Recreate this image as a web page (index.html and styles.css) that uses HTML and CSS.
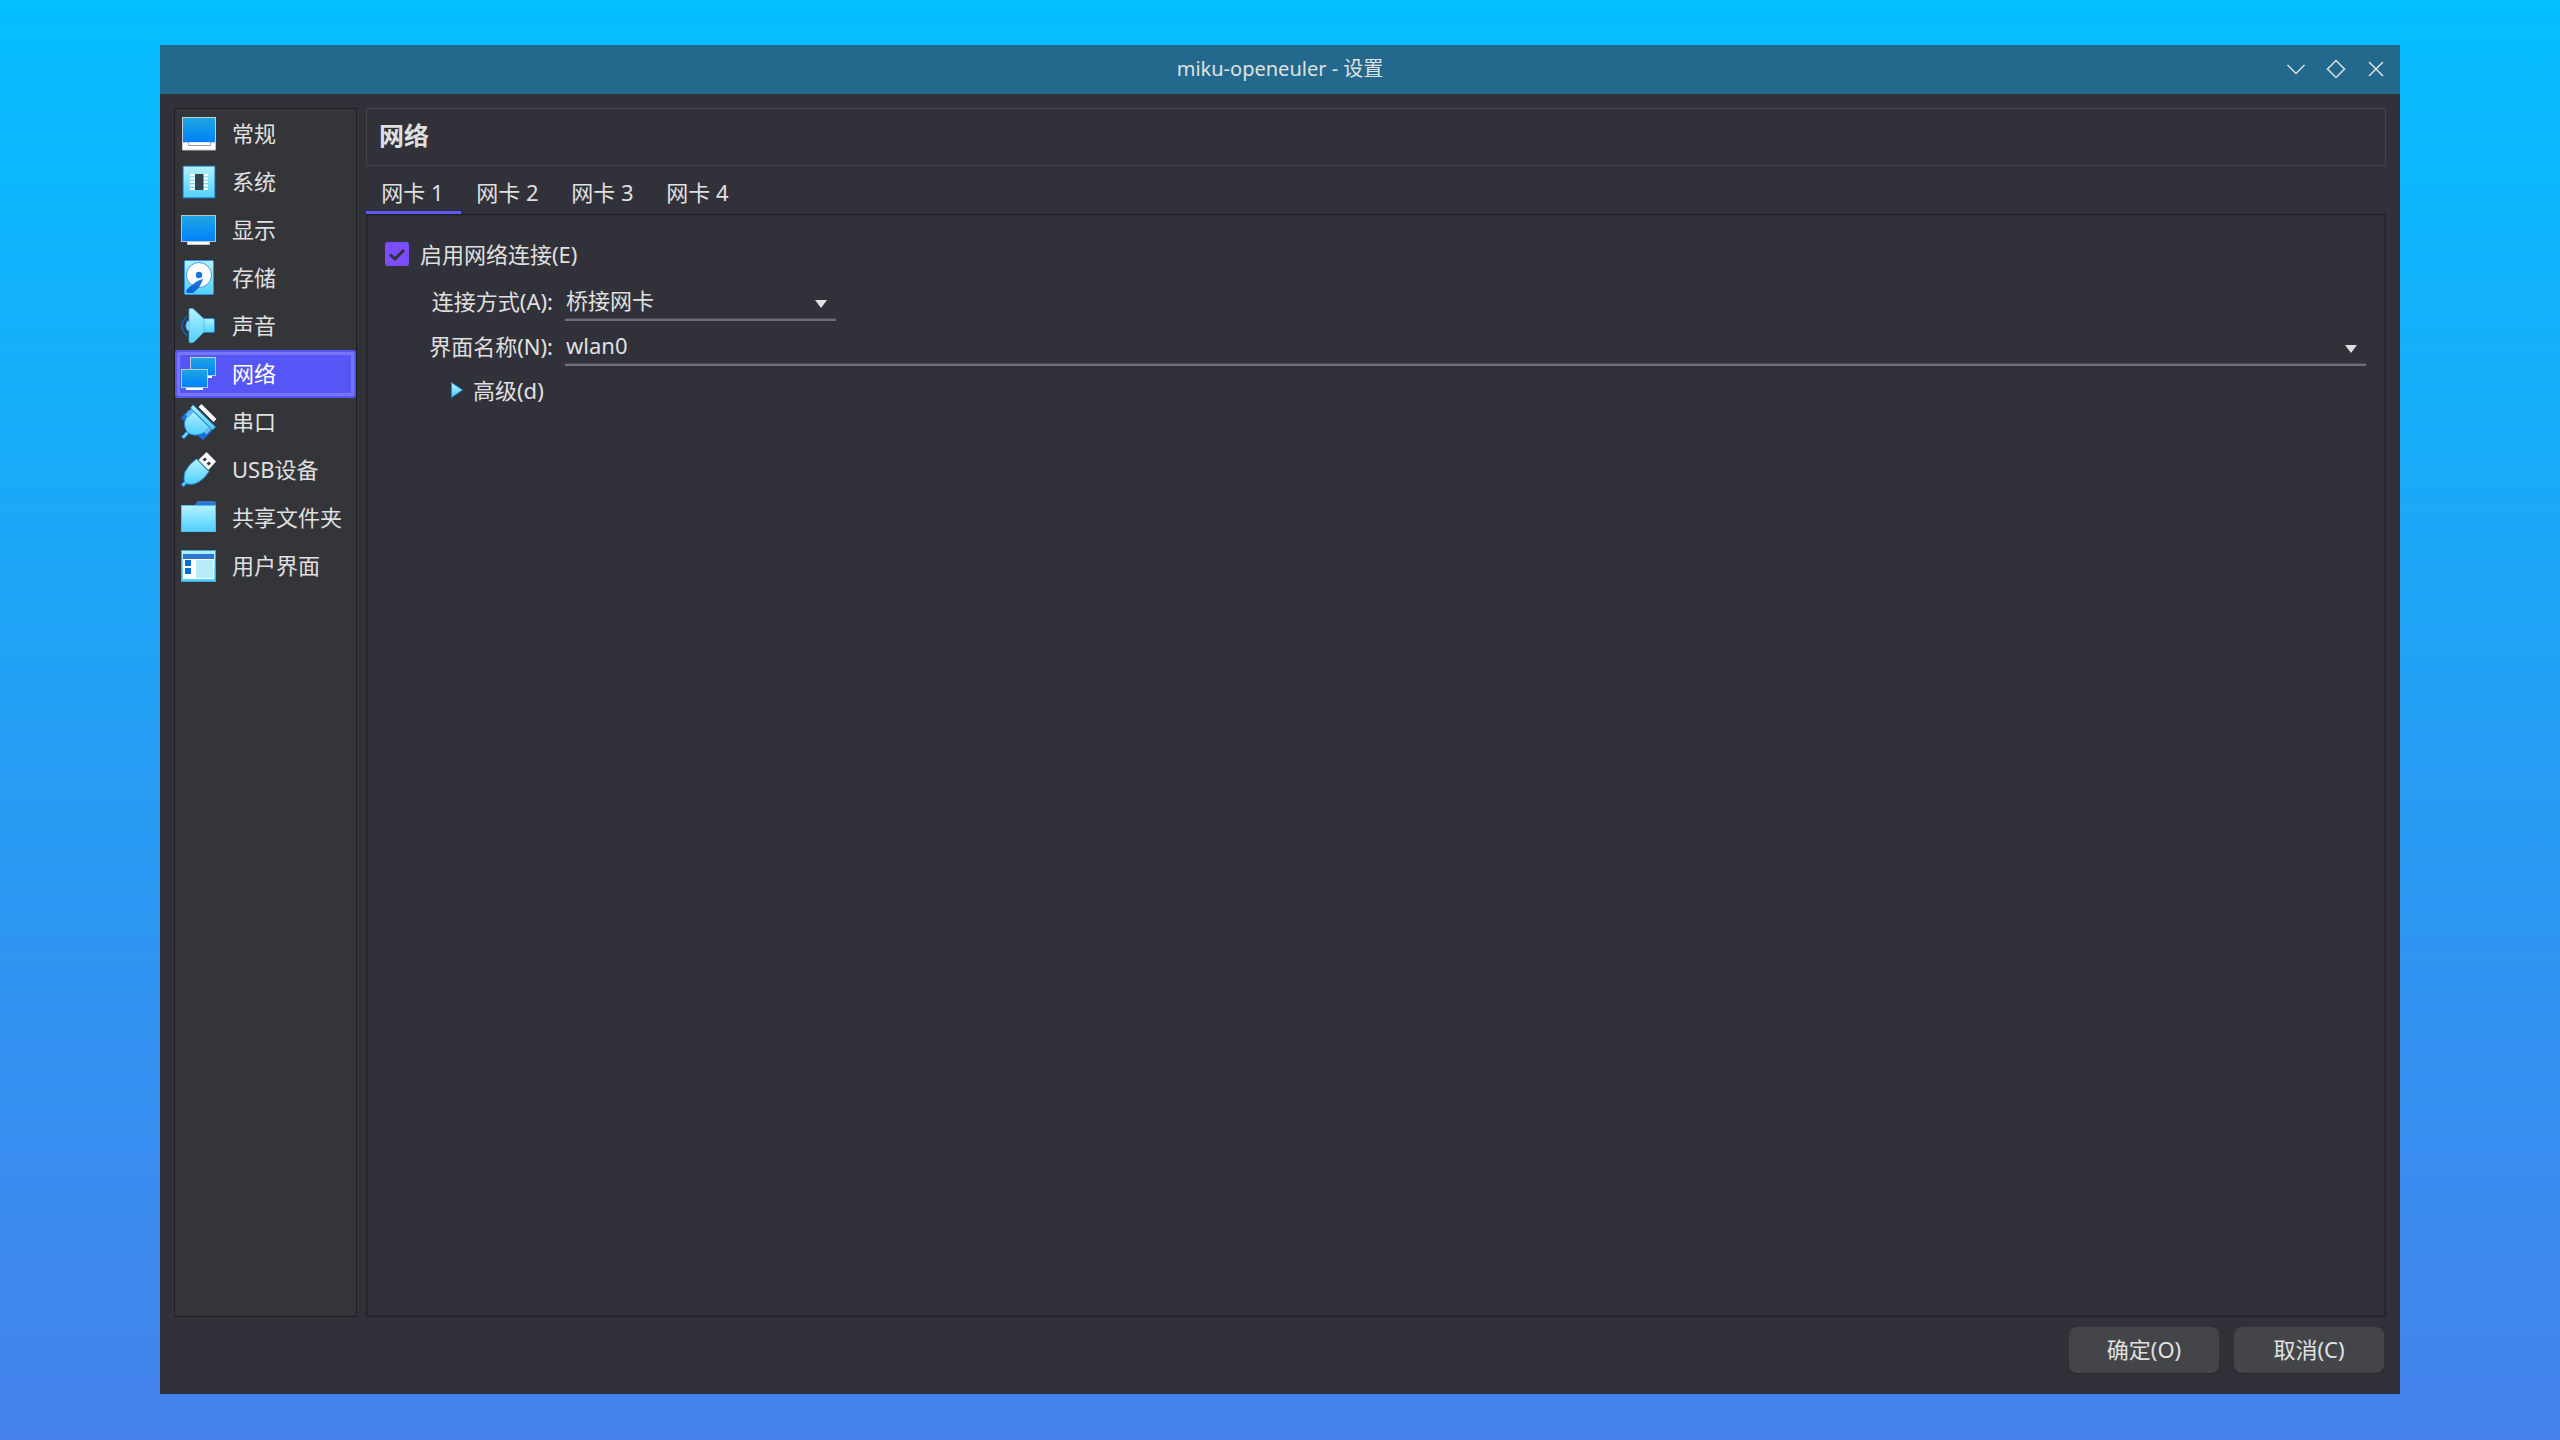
FILE: index.html
```html
<!DOCTYPE html>
<html lang="zh-CN">
<head>
<meta charset="utf-8">
<title>miku-openeuler - 设置</title>
<link rel="stylesheet" href="styles.css">
</head>
<body>
<svg class="defs" aria-hidden="true">
  <defs>
    <linearGradient id="screen" x1="0" y1="0" x2="0" y2="1"><stop offset="0" stop-color="#20a6e0"/><stop offset="1" stop-color="#0080fc"/></linearGradient>
    <linearGradient id="sky" x1="0" y1="0" x2="0" y2="1"><stop offset="0" stop-color="#b4f2ff"/><stop offset="1" stop-color="#50d0ff"/></linearGradient>
    <linearGradient id="deep" x1="0" y1="0" x2="0" y2="1"><stop offset="0" stop-color="#3478d8"/><stop offset="1" stop-color="#0062d6"/></linearGradient>
  </defs>
</svg>
<main class="window">
  <header class="titlebar">
    <h1 class="title">miku-openeuler - 设置</h1>
    <div class="controls">
      <button class="control" aria-label="最小化"><svg viewBox="0 0 20 20"><path d="M1.500 6L10 14.500L18.500 6"/></svg></button>
      <button class="control" aria-label="最大化"><svg viewBox="0 0 20 20"><path d="M10 1.500L18.500 10L10 18.500L1.500 10Z"/></svg></button>
      <button class="control" aria-label="关闭"><svg viewBox="0 0 20 20"><path d="M3 3L17 17M17 3L3 17"/></svg></button>
    </div>
  </header>
  <div class="content">
    <nav class="sidebar">
      <button class="item"><svg class="icon" viewBox="0 0 36 36"><rect x="1.500" y="1.500" width="33" height="25" fill="url(#screen)" stroke="#c5cdd2"/><path d="M1.500 26.500H34.500V34H1.500Z" fill="#fff" stroke="#c8c8c8"/><path d="M7.500 26.500V29.500H29.500V26.500" fill="#fff" stroke="#999"/></svg>常规</button>
      <button class="item"><svg class="icon" viewBox="0 0 36 36"><rect x="2" y="2" width="32" height="32" fill="url(#sky)" stroke="#1565b8"/><path d="M9 11H27M9 14.500H27M9 18H27M9 21.500H27M9 25H27" stroke="#fff" stroke-width="2"/><rect x="14" y="10" width="8.500" height="16" fill="#3a414e"/></svg>系统</button>
      <button class="item"><svg class="icon" viewBox="0 0 36 36"><rect x="6.500" y="28.500" width="22" height="4" fill="#fff" stroke="#ccc"/><rect x=".5" y="3.500" width="34" height="26" fill="url(#screen)" stroke="#b4c3cc"/></svg>显示</button>
      <button class="item"><svg class="icon" viewBox="0 0 36 36"><rect x="3.500" y=".5" width="29" height="34" rx="1" fill="url(#sky)" stroke="#2e92e8"/><circle cx="18" cy="15" r="12.500" fill="#fff" stroke="#4a9ae0"/><circle cx="18" cy="15" r="3.200" fill="#1a74d8"/><path d="M22 19C17 20 11 24 5.500 30Q4.500 33 7 33H12Q20 27 22 19Z" fill="url(#deep)"/></svg>存储</button>
      <button class="item"><svg class="icon" viewBox="0 0 36 36"><path d="M6 8.500Q-4.500 18 6 27.500" fill="none" stroke="#1763b0" stroke-width="1.500"/><path d="M9 13H6Q3.500 18 6 22.500H9Z" fill="#8fe2ff" stroke="#2585d0"/><path d="M22 10.500H32Q33.500 10.500 33.500 12V23Q33.500 24.500 32 24.500H22Z" fill="url(#sky)" stroke="#2585d0"/><path d="M8 1Q10 -.5 12.500 1L23 11V24L13 34Q10 36 8 34Z" fill="url(#sky)" stroke="#48aee8" stroke-width=".7"/></svg>声音</button>
      <button class="item selected" aria-current="page"><svg class="icon" viewBox="0 0 36 36"><path d="M25 19H31V22H25Z" fill="#fff"/><rect x="9.500" y="1.500" width="25" height="18" fill="url(#screen)" stroke="#b9cbd8"/><rect x="5" y="31" width="17" height="3" fill="#fff"/><rect x=".5" y="13.500" width="26" height="18" fill="url(#screen)" stroke="#b9cbd8"/></svg>网络</button>
      <button class="item"><svg class="icon" viewBox="0 0 36 36"><path d="M19 1.500L34 16.500" stroke="#fff" stroke-width="4"/><path d="M0 14L8 5L12 9L4 18ZM27 23L31 27L22 36L17 32Z" fill="#1670dc"/><path d="M1.500 34L8 27" stroke="#1f86e0" stroke-width="4"/><path d="M2 33.500L8 27" stroke="#78dcff" stroke-width="2"/><path d="M11 6L29 24L24 28Q15 34 7 29Q1 22 5 14Z" fill="url(#sky)" stroke="#1f80d8"/><path d="M12 .8L34.500 23L31.500 26L9.500 4Z" fill="url(#sky)" stroke="#2590e0"/><path d="M11.500 6.500L6 12M29 24L24 29" stroke="#65b8f2" stroke-width="4"/></svg>串口</button>
      <button class="item"><svg class="icon" viewBox="0 0 36 36"><path d="M1 34L6 29" stroke="#1f86e0" stroke-width="4"/><path d="M2 33L7 28" stroke="#78dcff" stroke-width="2"/><path d="M15.500 7L28 19.500Q22 29 13 32Q7 33 4 31Q2 27 4 20Q8 12 15.500 7Z" fill="url(#sky)" stroke="#2590e0"/><path d="M25.500 0L35 9.500L27.500 18L17.500 8Z" fill="#fff"/><path d="M21.500 7.500L24 5.500L26 7.500L23.500 9.500ZM25.500 11.500L28 9.500L30 11.500L27.500 13.500Z" fill="#333"/></svg>USB设备</button>
      <button class="item"><svg class="icon" viewBox="0 0 36 36"><path d="M13 6L16.500 1H34L35 3V6Z" fill="#2d76d2"/><rect x=".5" y="5.500" width="34" height="26" fill="url(#sky)" stroke="#55bdf4"/></svg>共享文件夹</button>
      <button class="item"><svg class="icon" viewBox="0 0 36 36"><rect x=".5" y="2.500" width="34" height="31" fill="url(#sky)" stroke="#42a8e8"/><path d="M2 6H33V31H2Z" fill="#fff"/><path d="M2 6H33V11H2Z" fill="#2f75d0"/><path d="M4 12H10V18H4ZM4 20H10V26H4Z" fill="#086bd8"/><path d="M15 12H32V30H15Z" fill="#b9ecfb"/></svg>用户界面</button>
    </nav>
    <section class="main">
      <h2 class="heading">网络</h2>
      <div class="tabs" role="tablist">
        <button class="tab active" role="tab" aria-selected="true">网卡 1</button>
        <button class="tab" role="tab" aria-selected="false">网卡 2</button>
        <button class="tab" role="tab" aria-selected="false">网卡 3</button>
        <button class="tab" role="tab" aria-selected="false">网卡 4</button>
      </div>
      <form class="pane" id="adapter" role="tabpanel">
        <label class="enable"><input class="check" type="checkbox" checked>启用网络连接(E)</label>
        <div class="fields">
          <label class="field-label" for="attach">连接方式(A):</label>
          <select class="combo short" id="attach"><option>桥接网卡</option></select>
          <label class="field-label" for="iface">界面名称(N):</label>
          <select class="combo" id="iface"><option>wlan0</option></select>
        </div>
        <button class="advanced" type="button" aria-expanded="false"><svg class="arrow" viewBox="0 0 12 16"><path d="M.5 .5L11.500 8L.5 15.500Z" fill="url(#sky)" stroke="#168fdc"/></svg>高级(d)</button>
      </form>
    </section>
  </div>
  <footer class="actions">
    <button class="action" type="submit" form="adapter">确定(O)</button>
    <button class="action" type="button">取消(C)</button>
  </footer>
</main>
</body>
</html>
```

FILE: styles.css
```css
* {
  box-sizing: border-box;
}

body {
  margin: 0;
  min-height: 100vh;
  display: flex;
  padding: 45px 160px 46px;
  background: linear-gradient(#04befe, #4481eb);
  color: #e0e0e0;
  font: 22px/32px "Noto Sans", "Noto Sans CJK SC", sans-serif;
}

button,
select {
  margin: 0;
  padding: 0;
  border: 0;
  background: none;
  color: inherit;
  font: inherit;
}

.defs {
  position: absolute;
  width: 0;
  height: 0;
}

.window {
  flex: 1;
  min-width: 0;
  display: flex;
  flex-direction: column;
  background: #313139;
}

.titlebar {
  display: grid;
  grid-template-columns: 1fr auto 1fr;
  align-items: center;
  height: 49px;
  padding: 0 14px 1px;
  background: #22698d;
}

.title {
  grid-column: 2;
  margin: 0;
  font-size: 20px;
  font-weight: 400;
  line-height: 28px;
}

.controls {
  display: flex;
  justify-content: flex-end;
  gap: 20px;
}

.control {
  display: flex;
}

.control svg {
  width: 20px;
  height: 20px;
  fill: none;
  stroke: #e0e0e0;
  stroke-width: 1.5;
}

.content {
  flex: 1;
  display: flex;
  gap: 9px;
  padding: 14px 14px 0;
}

.sidebar {
  display: flex;
  flex-direction: column;
  width: 183px;
  padding-top: 1px;
  border: 1px solid #1d1e20;
  background: #343539;
}

.item {
  display: flex;
  align-items: center;
  gap: 15px;
  height: 48px;
  padding: 0 0 3px 6px;
  white-space: nowrap;
}

.item.selected {
  border-radius: 4px;
  background: #5655f5;
  box-shadow: inset 0 0 0 2px #5655f5, inset 0 0 0 5px #7776f8;
  color: #fff;
}

.icon {
  flex: none;
  width: 36px;
  height: 36px;
  margin-top: 3px;
}

.main {
  flex: 1;
  min-width: 0;
  display: flex;
  flex-direction: column;
}

.heading {
  height: 58px;
  margin: 0;
  padding: 10px 12px;
  border: 1px solid #45464a;
  font-size: 25px;
  font-weight: 700;
  line-height: 32px;
}

.tabs {
  display: flex;
  height: 48px;
  padding-top: 8px;
}

.tab {
  width: 95px;
  padding: 0 2px 2px 0;
  border-bottom: 3px solid transparent;
}

.tab.active {
  border-bottom-color: #5b5af6;
}

.pane {
  flex: 1;
  padding: 23px 19px 23px 18px;
  border: 1px solid #222226;
  box-shadow: inset 0 0 0 1px #2b2b31;
}

.enable {
  display: flex;
  align-items: center;
  gap: 11px;
  width: max-content;
}

.check {
  appearance: none;
  width: 24px;
  height: 24px;
  margin: 0;
  border-radius: 3px;
  background: #7c4dff url('data:image/svg+xml,<svg xmlns="http://www.w3.org/2000/svg" viewBox="0 0 24 24"><path d="M5 12.500L10 17L19 8" fill="none" stroke="%23313139" stroke-width="3"/></svg>');
}

.fields {
  display: grid;
  grid-template-columns: 168px 1fr;
  column-gap: 12px;
  row-gap: 5px;
  padding-top: 11px;
}

.field-label {
  padding-top: 4px;
  text-align: right;
}

.combo {
  appearance: none;
  width: 100%;
  height: 40px;
  padding: 0 1px;
  border-bottom: 2px solid #6e6e74;
  background: url('data:image/svg+xml,<svg xmlns="http://www.w3.org/2000/svg" viewBox="0 0 12 8"><path d="M0 0H12L6 8Z" fill="%23e0e0e0"/></svg>') no-repeat right 9px top 19px / 12px 8px;
  box-shadow: inset 0 -1px #4a4a50;
}

.combo.short {
  width: 271px;
}

.advanced {
  display: flex;
  align-items: center;
  gap: 10px;
  padding: 8px 0 0 66px;
}

.arrow {
  width: 12px;
  height: 16px;
}

.actions {
  display: flex;
  justify-content: flex-end;
  gap: 15px;
  padding: 10px 16px 21px;
}

.action {
  width: 150px;
  height: 46px;
  padding-bottom: 3px;
  border-radius: 8px;
  background: #444549;
  box-shadow: 0 1px 1px #28282d;
}
```
